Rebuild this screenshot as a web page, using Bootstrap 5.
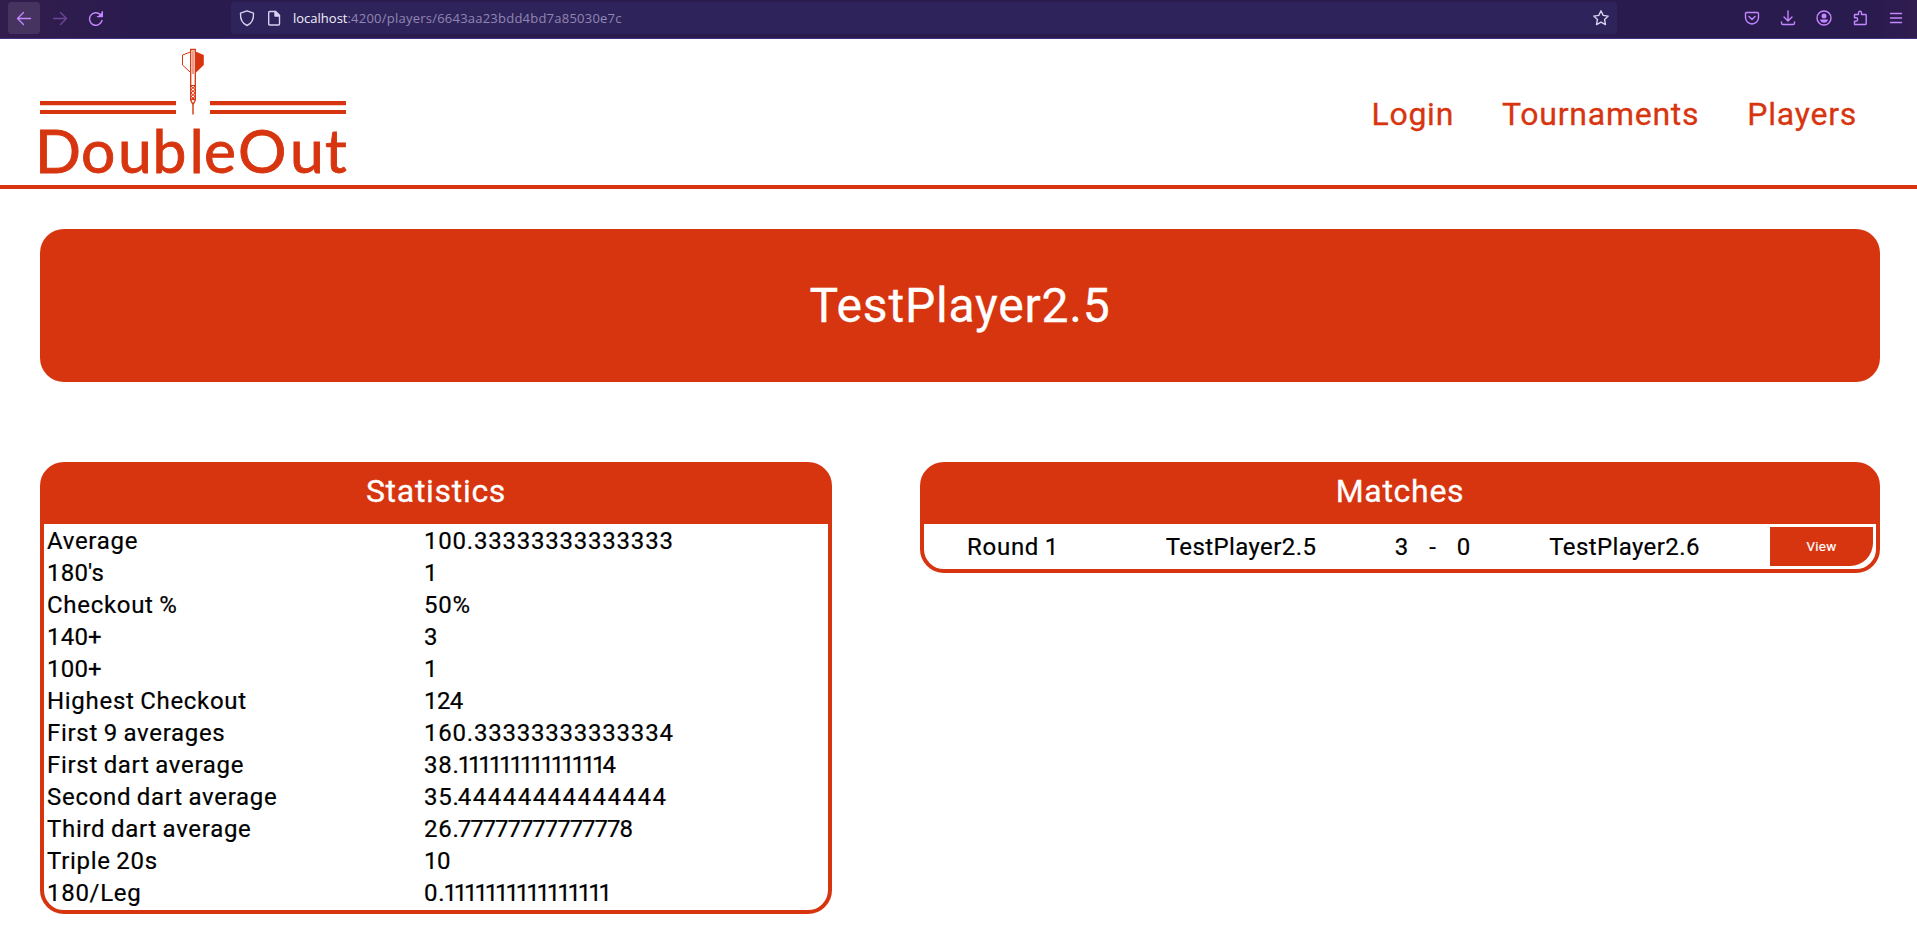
<!DOCTYPE html>
<html lang="en">
<head>
<meta charset="utf-8">
<title>DoubleOut</title>
<link href="https://cdn.jsdelivr.net/npm/bootstrap@5.3.0/dist/css/bootstrap.min.css" rel="stylesheet">
<script src="https://cdn.jsdelivr.net/npm/bootstrap@5.3.0/dist/js/bootstrap.bundle.min.js"></script>
<style>
:root{--brand:#d7350f}
body{font-family:Roboto,"Liberation Sans",sans-serif;color:#000;background:#fff;height:926px;overflow:hidden}
svg{display:block;flex:none}
.chrome{height:39px;padding:2px 13px 0 8px;background:linear-gradient(90deg,#321d4d 0,#2a1b4e 130px,#2a1b4e 1880px,#321d50 100%);border-bottom:1px solid #443083;color:#c486ff}
.line-icon{fill:none;stroke:currentColor;stroke-width:1.4;stroke-linecap:round;stroke-linejoin:round}
.tool{width:32px;height:32px;border-radius:4px;margin-right:4px}
.tool.hot{background:#47335f}
.tool.dim{color:#6d4594}
.url{width:1386px;height:32px;margin-left:115px;padding:0 7px;background:#2e245b;border-radius:4px;color:#d9d0ef}
.page-icon{margin-left:11px}
.url-text{font:13px/34px "Open Sans",sans-serif;color:#f4effc;margin-left:12px;white-space:pre}
.url-path{color:#9186b2;letter-spacing:.23px}
.tray{gap:20px}
.site{height:150px;border-bottom:4px solid var(--brand);padding:0 60px 0 40px}
.site a{color:var(--brand);font-size:32px;line-height:38px;letter-spacing:.75px;text-decoration:none;white-space:nowrap;-webkit-text-stroke:.3px}
.site nav{padding-top:3px}
.logo{overflow:visible}
.brand-name{font:60.5px Lato,sans-serif;fill:var(--brand);stroke:var(--brand);stroke-width:.9}
.main{padding:40px 37px 0 40px}
.hero{height:153px;border-radius:24px;background:var(--brand);color:#fff;font-size:48px;letter-spacing:.8px;-webkit-text-stroke:.3px}
.panels{margin-top:80px;gap:88px}
.panel{border:4px solid var(--brand);border-radius:24px;overflow:hidden;font-size:24px;letter-spacing:.7px;word-spacing:-1px;background:linear-gradient(var(--brand) 40px,#fff 40px)}
.panel-title{height:58px;background:var(--brand);color:#fff;font-size:32px;line-height:50px;letter-spacing:.7px;-webkit-text-stroke:.3px}
.stats{width:792px}
.matches{width:960px}
.stats-body{padding-bottom:2px;-webkit-text-stroke:.2px}
.stat{height:32px;line-height:34px;padding-left:3px;white-space:nowrap}
.stat>span:first-child{width:377px}
.stat>span:last-child{letter-spacing:.78px}
.stat>span.tight{letter-spacing:.2px}
.stat .ones{letter-spacing:-3.15px}
.stat .point{letter-spacing:-1.2px}
.stat .fours{letter-spacing:1.5px}
.stat .sevens{letter-spacing:-1.05px}
.stat>span.short{letter-spacing:-.6px}
.match{height:45px;padding:3px;line-height:40px;display:grid;grid-template-columns:172px 284px 99px 285px 1fr;text-align:center;-webkit-text-stroke:.2px}
.match .score span{width:31px;letter-spacing:0}
.match .player{letter-spacing:.4px}
.view{width:103px;height:39px;justify-self:end;padding:0 0 3px;background:var(--brand);color:#fff;border:0;border-radius:0 0 23px 0;font-size:13.33px;letter-spacing:.25px}
</style>
</head>
<body>
<div class="chrome d-flex align-items-start">
  <span class="tool hot d-flex align-items-center justify-content-center"><svg class="line-icon" width="16" height="16" viewBox="0 0 16 16"><path d="M14.5 8.5h-13M7.5 2.5l-6 6 6 6"/></svg></span>
  <span class="tool dim d-flex align-items-center justify-content-center"><svg class="line-icon" width="16" height="16" viewBox="0 0 16 16"><path d="M1.500 8.500h13M8.500 2.500l6 6-6 6"/></svg></span>
  <span class="tool d-flex align-items-center justify-content-center"><svg class="line-icon" width="16" height="16" viewBox="0 0 16 16"><path d="M14 10.500a6.300 6.300 0 1 1-1.700-6M14.300 1.800v4.800H9.500"/><path d="M14.300 2.100v4.500H9.800z" fill="currentColor" stroke="none"/></svg></span>
  <div class="url d-flex align-items-center">
    <svg class="line-icon" width="18" height="18" viewBox="0 0 18 18"><path d="M9 1.800 L15.500 4.200C15.800 9.500 13.500 14.500 9 16.500 4.500 14.500 2.200 9.500 2.500 4.200z"/></svg>
    <svg class="line-icon page-icon" width="14" height="18" viewBox="0 0 14 18"><path d="M1.700 3.500q0-1 1-1h6l3.800 3.800v8.700q0 1-1 1H2.700q-1 0-1-1z"/><path d="M8 2.500v4.500h4.500z" fill="currentColor"/></svg>
    <span class="url-text">localhost<span class="url-path">:4200/players/6643aa23bdd4bd7a85030e7c</span></span>
    <svg class="line-icon ms-auto" width="18" height="18" viewBox="0 0 18 18"><path d="M9 1.800l2.200 4.600 5 .700-3.600 3.500.900 5L9 13.200l-4.500 2.400.900-5L1.800 7.100l5-.700z"/></svg>
  </div>
  <div class="tray d-flex align-items-center ms-auto h-100 pb-1">
    <svg class="line-icon" width="16" height="16" viewBox="0 0 16 16"><path d="M2.500 2.500h11q1 0 1 1v4a6.500 6.500 0 0 1-13 0v-4q0-1 1-1zM5 6.500l3 3 3-3"/></svg>
    <svg class="line-icon" width="16" height="16" viewBox="0 0 16 16"><path d="M8 1v9.500M4 7l4 4 4-4M1.500 12v1q0 1.500 1.500 1.500h10q1.500 0 1.500-1.500v-1"/></svg>
    <svg class="line-icon" width="16" height="16" viewBox="0 0 16 16"><circle cx="8" cy="8" r="7"/><circle cx="8" cy="6" r="2.500" fill="currentColor" stroke="none"/><path d="M4 9.500h8q-.800 3.200-4 3.200t-4-3.200z" fill="currentColor" stroke="none"/></svg>
    <svg class="line-icon" width="16" height="16" viewBox="0 0 16 16"><path d="M2.500 14.500v-3.300H4a1.600 1.600 0 0 0 0-3.400H2.500V4.500h4V2.700a1.500 1.500 0 0 1 3 0v1.800h4q.700 0 .700.700v8.600q0 .700-.700.700z"/></svg>
    <svg class="line-icon" width="16" height="16" viewBox="0 0 16 16"><path d="M2.500 3.500h11M2.500 8h11M2.500 12.500h11"/></svg>
  </div>
</div>

<header class="site d-flex align-items-center justify-content-between">
  <svg class="logo" width="320" height="146" viewBox="40 39 320 146" role="img" aria-label="DoubleOut">
    <g fill="#d7350f">
      <path d="M40 101h136v4.300H40zM40 110h136v4H40zM210 101h136v4.300H210zM210 110h136v4H210z"/>
      <path d="M195.500 51.500L203.800 55v10l-8.300 8z"/>
      <path d="M192.300 104h1.400v10.500h-1.400z"/>
    </g>
    <g fill="none" stroke="#d7350f">
      <path d="M190.500 52L182.500 55v10l8 7.500"/>
      <path d="M190.700 49.500h4.600v50.500l-1.800 3.500h-1l-1.800-3.500z" stroke-width="1.300"/>
      <path d="M193 51v23" stroke-width="1.500" stroke-opacity=".65"/>
      <path d="M190.500 85.500h5M190.500 99.500h5"/>
      <path d="M191 86l4 3.500-4 3.500 4 3.500-4 3M195 86l-4 3.500 4 3.500-4 3.500 4 3"/>
    </g>
    <text class="brand-name" x="35 81 118 152.500 189.500 204 238 290 325" y="172.500">DoubleOut</text>
  </svg>
  <nav class="d-flex gap-5"><a href="#">Login</a><a href="#">Tournaments</a><a href="#">Players</a></nav>
</header>

<main class="main">
  <div class="hero d-flex align-items-center justify-content-center">TestPlayer2.5</div>
  <div class="panels d-flex align-items-start">
    <section class="panel stats">
      <div class="panel-title text-center">Statistics</div>
      <div class="stats-body">
        <div class="stat d-flex"><span>Average</span><span>100.33333333333333</span></div>
        <div class="stat d-flex"><span class="tight">180's</span><span>1</span></div>
        <div class="stat d-flex"><span>Checkout %</span><span>50%</span></div>
        <div class="stat d-flex"><span class="tight">140+</span><span>3</span></div>
        <div class="stat d-flex"><span class="tight">100+</span><span>1</span></div>
        <div class="stat d-flex"><span>Highest Checkout</span><span class="short">124</span></div>
        <div class="stat d-flex"><span>First 9 averages</span><span>160.33333333333334</span></div>
        <div class="stat d-flex"><span>First dart average</span><span>38<span class="point">.</span><span class="ones">11111111111111</span>4</span></div>
        <div class="stat d-flex"><span>Second dart average</span><span>35<span class="point">.</span><span class="fours">44444444444444</span></span></div>
        <div class="stat d-flex"><span>Third dart average</span><span>26<span class="point">.</span><span class="sevens">7777777777777</span>8</span></div>
        <div class="stat d-flex"><span>Triple 20s</span><span class="short">10</span></div>
        <div class="stat d-flex"><span>180/Leg</span><span>0<span class="point">.</span><span class="ones">1111111111111111</span></span></div>
      </div>
    </section>
    <section class="panel matches">
      <div class="panel-title text-center">Matches</div>
      <div class="match">
        <span>Round 1</span>
        <span class="player">TestPlayer2.5</span>
        <span class="score d-flex justify-content-center"><span>3</span><span>-</span><span>0</span></span>
        <span class="player">TestPlayer2.6</span>
        <button class="view" type="button">View</button>
      </div>
    </section>
  </div>
</main>
</body>
</html>
